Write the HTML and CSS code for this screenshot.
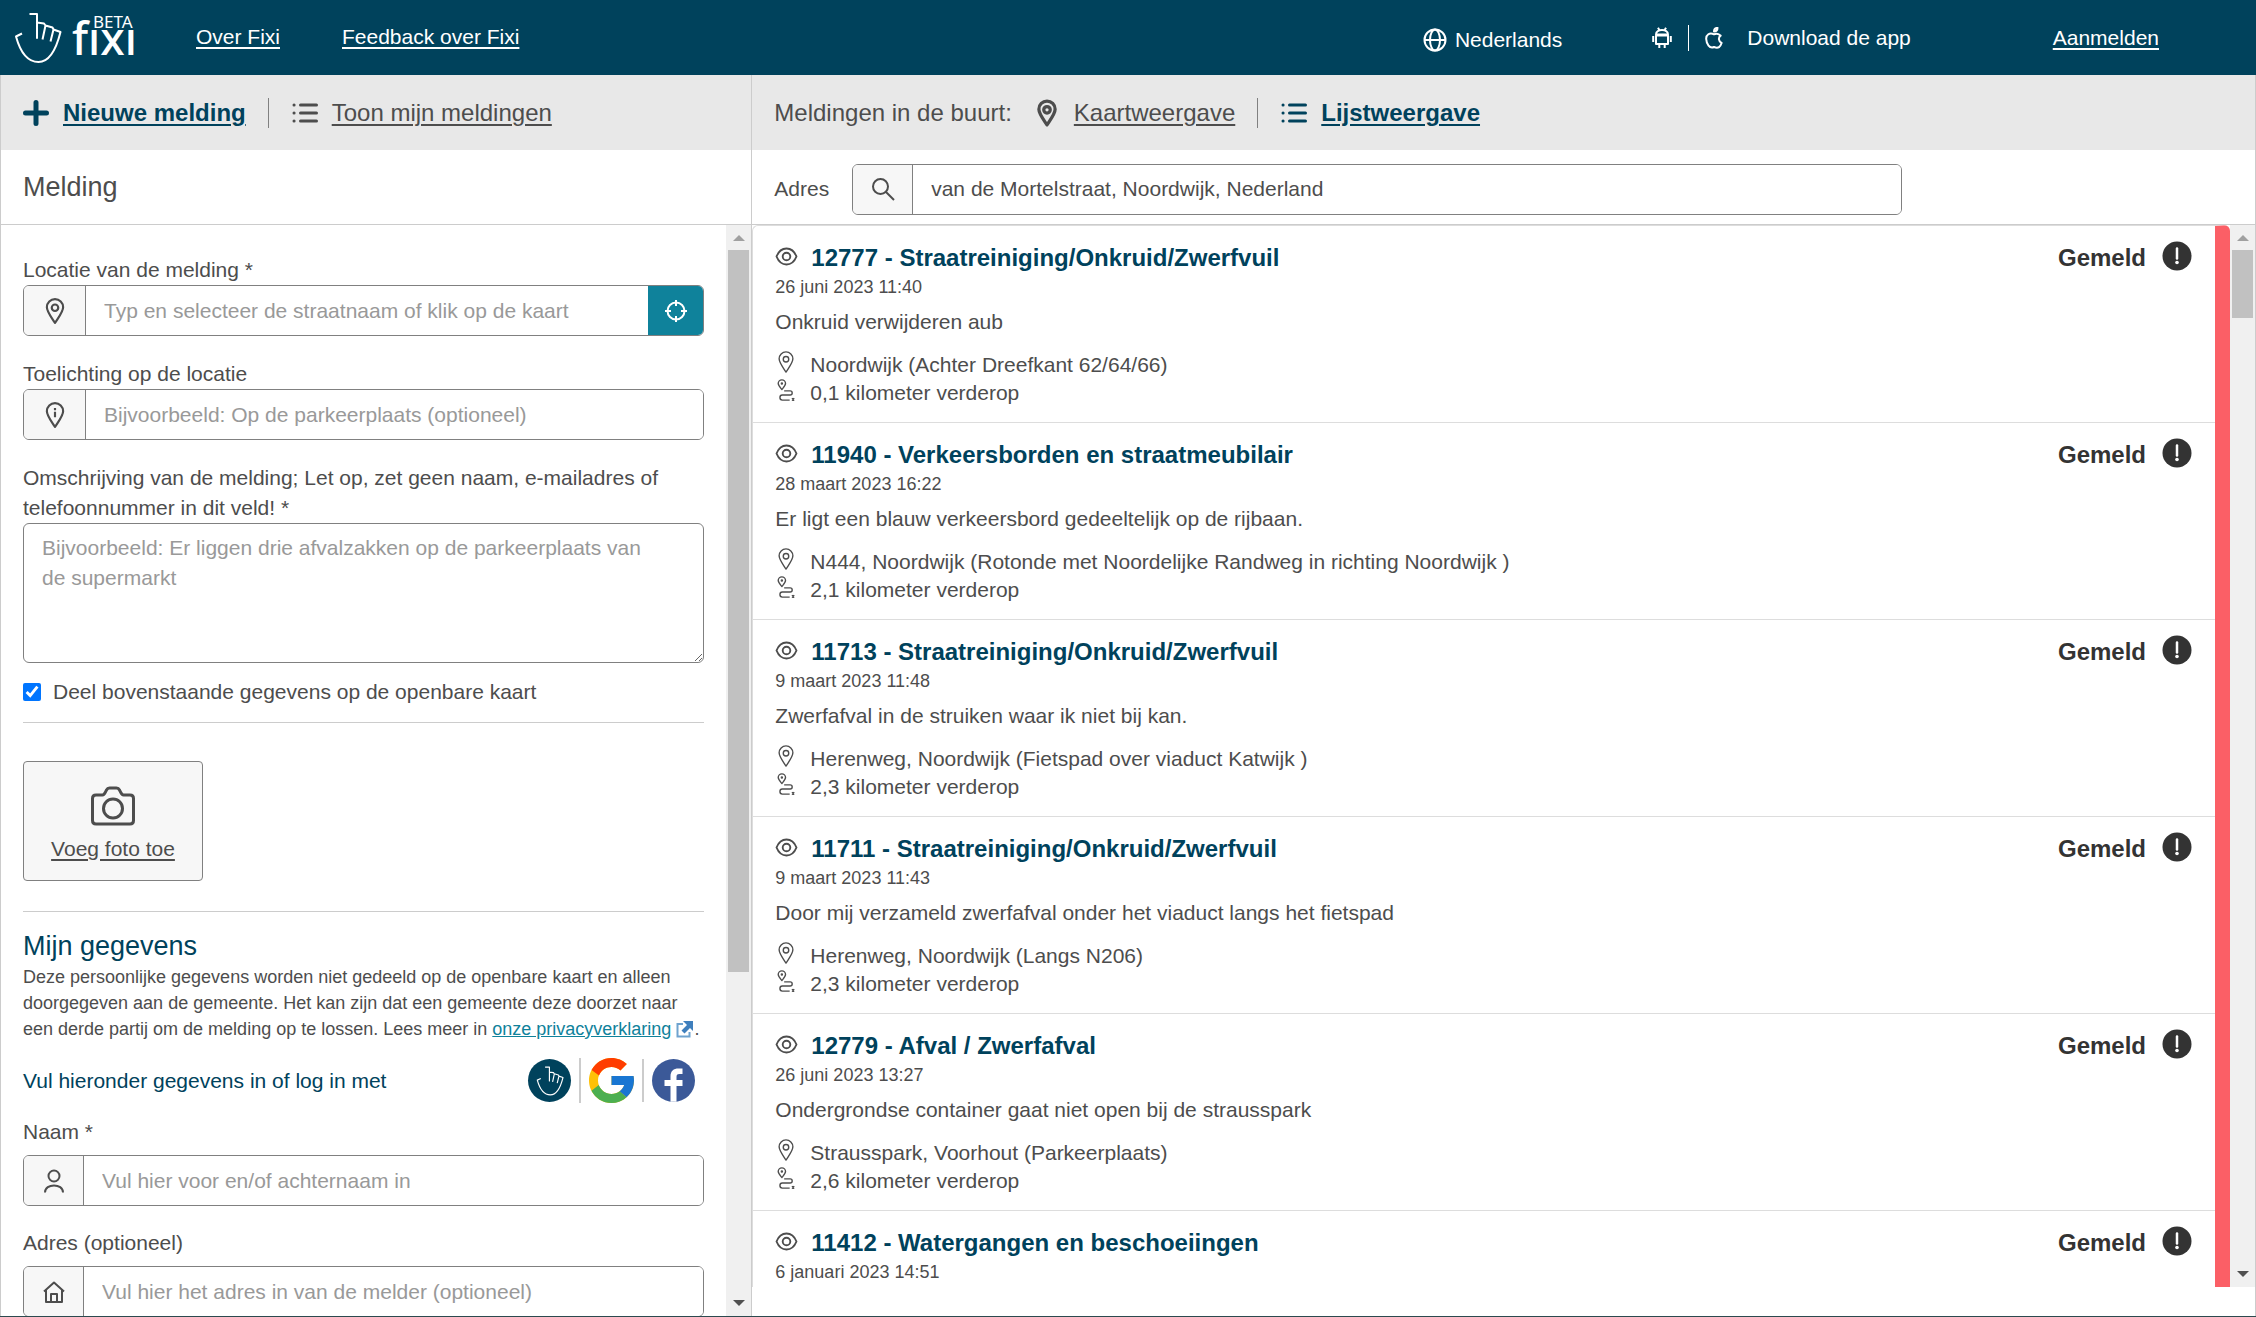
FILE: index.html
```html
<!DOCTYPE html>
<html lang="nl">
<head>
<meta charset="utf-8">
<title>Fixi</title>
<link rel="stylesheet" href="styles.css">
</head>
<body>
<svg class="sprite" aria-hidden="true">
  <symbol id="hand" viewBox="0 0 48 52"><path d="M8 21.500L2 24.500Q9 50 24.500 50Q39 50 46.500 20L39.500 17.500L36.500 29.500M39.500 17.500L38.500 15.500L31.500 13.500L28.500 27.500M31.500 13.500L30 11.500L23 10.500V26V2H15.500"/></symbol>
  <symbol id="pin" viewBox="0 0 24 24"><path d="M12 23C8 16.800 4.500 12.500 4.500 8.500a7.500 7.500 0 0 1 15 0C19.500 12.500 16 16.800 12 23z"/><circle cx="12" cy="9" r="3"/></symbol>
  <symbol id="pin-info" viewBox="0 0 24 24"><path d="M12 23C8 16.800 4.500 12.500 4.500 8.500a7.500 7.500 0 0 1 15 0C19.500 12.500 16 16.800 12 23z"/><path d="M12 5.500V7.500M12 9v5"/></symbol>
  <symbol id="eye" viewBox="0 0 24 20"><path d="M1.500 10C6 -1.200 18 -1.200 22.500 10C18 21.200 6 21.200 1.500 10z"/><circle cx="12" cy="10" r="4"/></symbol>
  <symbol id="route" viewBox="0 0 20 24"><path d="M5.500 11.500C3 8.500 1.500 7 1.500 5a4 4 0 0 1 8 0C9.500 7 8 8.500 5.500 11.500zM8 13h6.500c3 0 3 4.500 0 4.500H6c-3.500 0-3.500 5.500 0 5.500h8"/><circle cx="5.500" cy="5" r=".6"/><path d="M16.500 21l2.500 2.500M19 21l-2.500 2.500"/></symbol>
  <symbol id="list" viewBox="0 0 26 22"><path d="M8.500 3H24.500M8.500 11H24.500M8.500 19H24.500M2 3h.1M2 11h.1M2 19h.1"/></symbol>
  <symbol id="alert" viewBox="0 0 30 30"><circle cx="15" cy="15" r="14.500" fill="#333"/><path d="M15 7.500V17.500" stroke="#fff" stroke-width="2.500" stroke-linecap="round"/><circle cx="15" cy="21.500" r="1.800" fill="#fff"/></symbol>
</svg>

<header class="topbar">
  <a class="logo" href="#" aria-label="Fixi beta">
    <svg class="icon logo-hand"><use href="#hand"/></svg>
    <svg class="logo-word" viewBox="0 0 66 60"><text class="word-main" x="0" y="47">fıxı</text><text class="word-beta" x="21" y="20">BETA</text></svg>
  </a>
  <nav class="topnav">
    <a href="#">Over Fixi</a>
    <a href="#">Feedback over Fixi</a>
  </nav>
  <div class="tools">
    <button class="language" type="button">
      <svg class="icon" width="24" height="24" viewBox="0 0 24 24"><circle cx="12" cy="12" r="10.500"/><ellipse cx="12" cy="12" rx="5" ry="10.500"/><path d="M1.500 12h21"/></svg>
      Nederlands
    </button>
    <a class="download" href="#">
      <svg class="icon" width="20" height="22" viewBox="0 0 20 22"><path d="M4 8.500V17h12V8.500zM4 7.500C4 1.500 16 1.500 16 7.500zM6 .800L7.300 3M14 .800L12.700 3M1.200 9v6M18.800 9v6M7.300 17v4M12.700 17v4"/></svg>
      <span class="rule"></span>
      <svg class="icon" width="18" height="22" viewBox="0 0 18 22"><path d="M14.800 8C12.500 6 11 6.500 9 7.300C4.500 5 1 8 1.200 12C1.500 17 4.500 22 9 20C13.500 22 15.500 19.500 16.600 16C13.500 14.500 13 10.500 15.600 8.600zM9 4.500C9 2.500 10.500 1 12.500 .800C12.500 3 11 4.500 9 4.500z"/></svg>
      <span class="download-text">Download de app</span>
    </a>
    <a href="#">Aanmelden</a>
  </div>
</header>

<div class="columns">
  <section class="report">
    <nav class="tabs">
      <a class="tab active" href="#"><svg class="icon thick" width="26" height="26" viewBox="0 0 26 26"><path d="M13 2.500v21M2.500 13h21" stroke-width="5"/></svg><span>Nieuwe melding</span></a>
      <a class="tab second" href="#"><svg class="icon thick" width="26" height="22"><use href="#list"/></svg><span>Toon mijn meldingen</span></a>
    </nav>
    <div class="subhead"><h1>Melding</h1></div>
    <div class="scroller">
      <form class="form">
        <div class="field">
          <label for="loc">Locatie van de melding *</label>
          <div class="group">
            <span class="addon"><svg class="icon" width="26" height="26"><use href="#pin"/></svg></span>
            <input id="loc" type="text" placeholder="Typ en selecteer de straatnaam of klik op de kaart">
            <button class="locate" type="button" aria-label="Gebruik mijn locatie"><svg class="icon" width="24" height="24" viewBox="0 0 24 24"><circle cx="12" cy="12" r="8.500"/><path d="M12 1v6M12 17v6M1 12h6M17 12h6"/></svg></button>
          </div>
        </div>
        <div class="field">
          <label for="note">Toelichting op de locatie</label>
          <div class="group">
            <span class="addon"><svg class="icon" width="26" height="26"><use href="#pin-info"/></svg></span>
            <input id="note" type="text" placeholder="Bijvoorbeeld: Op de parkeerplaats (optioneel)">
          </div>
        </div>
        <div class="field">
          <label for="desc">Omschrijving van de melding; Let op, zet geen naam, e-mailadres of telefoonnummer in dit veld! *</label>
          <textarea id="desc" placeholder="Bijvoorbeeld: Er liggen drie afvalzakken op de parkeerplaats van de supermarkt"></textarea>
        </div>
        <div class="check">
          <input id="share" type="checkbox" checked>
          <label for="share">Deel bovenstaande gegevens op de openbare kaart</label>
        </div>
        <div class="photo-block">
          <button class="photo" type="button">
            <svg class="icon" width="44" height="40" viewBox="0 0 44 40"><path d="M5 9h6.500c2 0 2-1 4-5q1-2 3-2h7q2 0 3 2c2 4 2 5 4 5H39q3.500 0 3.500 3.500V34.500q0 3.500-3.500 3.500H5q-3.500 0-3.500-3.500V12.500Q1.500 9 5 9z"/><circle cx="22" cy="22.500" r="9.500"/></svg>
            <span>Voeg foto toe</span>
          </button>
        </div>
        <h2>Mijn gegevens</h2>
        <p class="privacy">Deze persoonlijke gegevens worden niet gedeeld op de openbare kaart en alleen doorgegeven aan de gemeente. Het kan zijn dat een gemeente deze doorzet naar een derde partij om de melding op te lossen. Lees meer in <a href="#">onze privacyverklaring</a> <svg class="external" width="18" height="18" viewBox="0 0 18 18"><path d="M7 4H1.500v12.500H13.500V12" fill="none" stroke="#6fa3cf" stroke-width="2"/><path d="M7 1h10v10l-3-3-4.500 4.500-1 1-3-3 5.500-5.500z" fill="#3f7fbd"/></svg>.</p>
        <div class="login">
          <span>Vul hieronder gegevens in of log in met</span>
          <div class="providers">
            <a class="fixi-login" href="#" aria-label="Fixi"><svg class="icon" width="28" height="30"><use href="#hand"/></svg></a>
            <a href="#" aria-label="Google"><svg width="45" height="45" viewBox="4 4 40 40"><path fill="#ffc107" d="M43.611,20.083H42V20H24v8h11.303c-1.649,4.657-6.080,8-11.303,8c-6.627,0-12-5.373-12-12c0-6.627,5.373-12,12-12c3.059,0,5.842,1.154,7.961,3.039l5.657-5.657C34.046,6.053,29.268,4,24,4C12.955,4,4,12.955,4,24c0,11.045,8.955,20,20,20c11.045,0,20-8.955,20-20C44,22.659,43.862,21.350,43.611,20.083z"/><path fill="#ff3d00" d="M6.306,14.691l6.571,4.819C14.655,15.108,18.961,12,24,12c3.059,0,5.842,1.154,7.961,3.039l5.657-5.657C34.046,6.053,29.268,4,24,4C16.318,4,9.656,8.337,6.306,14.691z"/><path fill="#4caf50" d="M24,44c5.166,0,9.860-1.977,13.409-5.192l-6.190-5.238C29.211,35.091,26.715,36,24,36c-5.202,0-9.619-3.317-11.283-7.946l-6.522,5.025C9.505,39.556,16.227,44,24,44z"/><path fill="#1976d2" d="M43.611,20.083H42V20H24v8h11.303c-0.792,2.237-2.231,4.166-4.087,5.571l6.193,5.236C36.971,39.205,44,34,44,24C44,22.659,43.862,21.350,43.611,20.083z"/></svg></a>
            <a href="#" aria-label="Facebook"><svg width="43" height="43" viewBox="0 0 43 43"><circle cx="21.500" cy="21.500" r="21.500" fill="#3b5998"/><path fill="#fff" d="M18.500 42.800V27H12.500V21H18.500V17.500C18.500 12 21.500 9.500 26.500 9.500H30.500V15H27.500C25 15 24.500 16 24.500 18V21H30.500V27H24.500V42.800z"/></svg></a>
          </div>
        </div>
        <div class="field spaced">
          <label for="name">Naam *</label>
          <div class="group">
            <span class="addon narrow"><svg class="icon" width="22" height="24" viewBox="0 0 22 24"><circle cx="11" cy="7" r="5.500"/><path d="M2 23.500C2 14 20 14 20 23.500"/></svg></span>
            <input id="name" type="text" placeholder="Vul hier voor en/of achternaam in">
          </div>
        </div>
        <div class="field spaced">
          <label for="address">Adres (optioneel)</label>
          <div class="group">
            <span class="addon narrow"><svg class="icon" width="22" height="22" viewBox="0 0 22 22"><path d="M1 10.500L11 1.500l10 9M3 9v12h16V9M8 21v-8h6v8"/></svg></span>
            <input id="address" type="text" placeholder="Vul hier het adres in van de melder (optioneel)">
          </div>
        </div>
      </form>
      <div class="bar" aria-hidden="true"><i class="up"></i><i class="thumb long"></i><i class="down"></i></div>
    </div>
  </section>

  <section class="nearby">
    <nav class="tabs">
      <span class="caption">Meldingen in de buurt:</span>
      <a class="tab" href="#"><svg class="icon map-pin" width="26" height="28"><use href="#pin"/></svg><span>Kaartweergave</span></a>
      <a class="tab second active" href="#"><svg class="icon thick" width="26" height="22"><use href="#list"/></svg><span>Lijstweergave</span></a>
    </nav>
    <div class="subhead search-row">
      <label for="search">Adres</label>
      <div class="group search">
        <span class="addon narrow"><svg class="icon" width="24" height="24" viewBox="0 0 24 24"><circle cx="9.500" cy="9.500" r="7.500"/><path d="M15 15l8 8"/></svg></span>
        <input id="search" type="text" value="van de Mortelstraat, Noordwijk, Nederland">
      </div>
    </div>
    <div class="scroller list-box">
      <div class="list">
        <article class="item">
          <div class="title"><svg class="icon" width="23" height="19"><use href="#eye"/></svg><h3>12777 - Straatreiniging/Onkruid/Zwerfvuil</h3><span class="status">Gemeld</span><svg class="alert" width="30" height="30"><use href="#alert"/></svg></div>
          <time>26 juni 2023 11:40</time>
          <p>Onkruid verwijderen aub</p>
          <div class="meta"><svg class="icon" width="22" height="24"><use href="#pin"/></svg>Noordwijk (Achter Dreefkant 62/64/66)</div>
          <div class="meta"><svg class="icon" width="22" height="22"><use href="#route"/></svg>0,1 kilometer verderop</div>
        </article>
        <article class="item">
          <div class="title"><svg class="icon" width="23" height="19"><use href="#eye"/></svg><h3>11940 - Verkeersborden en straatmeubilair</h3><span class="status">Gemeld</span><svg class="alert" width="30" height="30"><use href="#alert"/></svg></div>
          <time>28 maart 2023 16:22</time>
          <p>Er ligt een blauw verkeersbord gedeeltelijk op de rijbaan.</p>
          <div class="meta"><svg class="icon" width="22" height="24"><use href="#pin"/></svg>N444, Noordwijk (Rotonde met Noordelijke Randweg in richting Noordwijk )</div>
          <div class="meta"><svg class="icon" width="22" height="22"><use href="#route"/></svg>2,1 kilometer verderop</div>
        </article>
        <article class="item">
          <div class="title"><svg class="icon" width="23" height="19"><use href="#eye"/></svg><h3>11713 - Straatreiniging/Onkruid/Zwerfvuil</h3><span class="status">Gemeld</span><svg class="alert" width="30" height="30"><use href="#alert"/></svg></div>
          <time>9 maart 2023 11:48</time>
          <p>Zwerfafval in de struiken waar ik niet bij kan.</p>
          <div class="meta"><svg class="icon" width="22" height="24"><use href="#pin"/></svg>Herenweg, Noordwijk (Fietspad over viaduct Katwijk )</div>
          <div class="meta"><svg class="icon" width="22" height="22"><use href="#route"/></svg>2,3 kilometer verderop</div>
        </article>
        <article class="item">
          <div class="title"><svg class="icon" width="23" height="19"><use href="#eye"/></svg><h3>11711 - Straatreiniging/Onkruid/Zwerfvuil</h3><span class="status">Gemeld</span><svg class="alert" width="30" height="30"><use href="#alert"/></svg></div>
          <time>9 maart 2023 11:43</time>
          <p>Door mij verzameld zwerfafval onder het viaduct langs het fietspad</p>
          <div class="meta"><svg class="icon" width="22" height="24"><use href="#pin"/></svg>Herenweg, Noordwijk (Langs N206)</div>
          <div class="meta"><svg class="icon" width="22" height="22"><use href="#route"/></svg>2,3 kilometer verderop</div>
        </article>
        <article class="item">
          <div class="title"><svg class="icon" width="23" height="19"><use href="#eye"/></svg><h3>12779 - Afval / Zwerfafval</h3><span class="status">Gemeld</span><svg class="alert" width="30" height="30"><use href="#alert"/></svg></div>
          <time>26 juni 2023 13:27</time>
          <p>Ondergrondse container gaat niet open bij de strausspark</p>
          <div class="meta"><svg class="icon" width="22" height="24"><use href="#pin"/></svg>Strausspark, Voorhout (Parkeerplaats)</div>
          <div class="meta"><svg class="icon" width="22" height="22"><use href="#route"/></svg>2,6 kilometer verderop</div>
        </article>
        <article class="item">
          <div class="title"><svg class="icon" width="23" height="19"><use href="#eye"/></svg><h3>11412 - Watergangen en beschoeiingen</h3><span class="status">Gemeld</span><svg class="alert" width="30" height="30"><use href="#alert"/></svg></div>
          <time>6 januari 2023 14:51</time>
        </article>
      </div>
      <div class="bar" aria-hidden="true"><i class="up"></i><i class="thumb short"></i><i class="down"></i></div>
    </div>
  </section>
</div>
</body>
</html>
```
FILE: styles.css
```css
* { box-sizing: border-box; }

body {
  margin: 0;
  height: 100vh;
  display: flex;
  flex-direction: column;
  overflow: hidden;
  border-bottom: 1px solid #2c4a4f;
  background: #fff;
  color: #4d4d4d;
  font: 21px/30px "Liberation Sans", Arial, sans-serif;
}

h1, h2, h3, p { margin: 0; font-weight: normal; }
button, input, textarea { font: inherit; color: inherit; }
button { cursor: pointer; }
svg { flex: none; display: block; }

.sprite { position: absolute; width: 0; height: 0; }
.icon { fill: none; stroke: currentColor; stroke-width: 2; stroke-linejoin: round; }

/* Top bar */
.topbar {
  flex: none;
  height: 75px;
  display: flex;
  align-items: center;
  padding: 0 97px 0 14px;
  background: #00425c;
  color: #fff;
}
.topbar a { color: #fff; text-underline-offset: 3px; }
.topbar .language, .topbar .download, .topbar .tools a { color: #fff; }
.logo { display: flex; align-items: center; gap: 10px; height: 75px; }
.logo-hand { width: 48px; height: 52px; }
.logo-word { width: 66px; height: 60px; }
.logo-word text { fill: #fff; font-family: "Noto Sans", sans-serif; }
.word-main { font-size: 45px; font-weight: 500; }
.word-beta { font-size: 17px; }
.topnav { display: flex; gap: 62px; margin-left: 58px; padding-bottom: 2px; }
.tools { display: flex; align-items: center; margin-left: auto; }
.language {
  display: flex;
  align-items: center;
  gap: 8px;
  padding: 4px 0 0;
  border: 0;
  background: none;
}
.topbar .download {
  display: flex;
  align-items: center;
  gap: 16px;
  margin: 0 142px 0 90px;
  text-decoration: none;
}
.rule { width: 1px; height: 26px; background: #fff; }
.download-text { margin-left: 8px; }

/* Two columns */
.columns { flex: 1; min-height: 0; display: flex; border: solid #ccc; border-width: 0 1px; }
.report { flex: none; width: 33.3333%; display: flex; flex-direction: column; border-right: 1px solid #ccc; }
.nearby { flex: 1; min-width: 0; display: flex; flex-direction: column; padding-bottom: 29px; }

.tabs {
  flex: none;
  height: 75px;
  display: flex;
  align-items: center;
  padding: 0 22px;
  background: #e8e8e8;
  font-size: 24px;
}
.tab { display: flex; align-items: center; gap: 14px; color: #4d4d4d; text-underline-offset: 3px; text-decoration: none; }
.tab span { text-decoration: underline; text-decoration-thickness: 2px; }
.tab.active { color: #00425c; font-weight: bold; }
.tab.second { margin-left: 22px; padding-left: 23px; border-left: 1px solid #808080; }
.thick { stroke-width: 3; stroke-linecap: round; }
.map-pin { stroke-width: 3; }
.caption { margin-right: 22px; }

.subhead {
  flex: none;
  height: 75px;
  display: flex;
  align-items: center;
  gap: 23px;
  padding: 0 22px;
  border-bottom: 1px solid #ccc;
}
.search-row { padding-top: 4px; }
h1, h2 { font-size: 27px; }
.search { width: 72%; }

.scroller { flex: 1; min-height: 0; display: flex; overflow: hidden; }

/* Input groups */
.group { display: flex; height: 51px; border: 1px solid #808080; border-radius: 6px; overflow: hidden; }
.group input { flex: 1; min-width: 0; padding: 0 18px; border: 0; background: #fff; outline: 0; }
.addon { flex: none; width: 62px; display: grid; place-items: center; background: #f7f7f7; border-right: 1px solid #808080; }
.addon.narrow { width: 60px; }
::placeholder { color: #999; opacity: 1; }
.locate { width: 56px; margin: -1px; padding: 0; display: grid; place-items: center; border: 0; background: #0f829b; color: #fff; }

/* Form */
.form { flex: 1; min-width: 0; padding: 30px 22px 0; }
.form label { display: block; }
.field { margin-bottom: 23px; }
.field.spaced { margin-bottom: 22px; }
.field.spaced label { margin-bottom: 8px; }
textarea {
  display: block;
  width: 100%;
  height: 140px;
  padding: 9px 42px 9px 18px;
  border: 1px solid #808080;
  border-radius: 6px;
}
.check { display: flex; align-items: center; gap: 12px; margin-top: -9px; }
.check input { width: 18px; height: 18px; margin: 0; accent-color: #0075ff; }
.photo-block { margin: 15px 0 19px; padding: 38px 0 30px; border: solid #ccc; border-width: 1px 0; }
.photo {
  width: 180px;
  height: 120px;
  display: flex;
  flex-direction: column;
  align-items: center;
  justify-content: center;
  gap: 8px;
  padding: 8px 0 0;
  border: 1px solid #808080;
  border-radius: 4px;
  background: #f7f7f7;
}
.photo .icon { stroke-width: 3; }
.photo span { text-decoration: underline; text-underline-offset: 3px; }
h2 { color: #00425c; }
.privacy { margin: 3px -2px 16px 0; font-size: 18px; line-height: 26px; }
.privacy a { color: #0f829b; }
.external { display: inline; vertical-align: -3px; }
.login { display: flex; align-items: center; justify-content: space-between; margin-bottom: 14px; color: #00425c; }
.providers { display: flex; align-items: center; padding-right: 9px; }
.providers a + a { margin-left: 8px; padding-left: 8px; border-left: 2px solid #ccc; }
.fixi-login { width: 43px; height: 43px; display: grid; place-items: center; border-radius: 50%; background: #00425c; color: #fff; }

/* Scroll bars */
.bar { flex: none; width: 25px; display: flex; flex-direction: column; align-items: center; padding: 10px 0; background: #f0f0f0; }
.up, .down { border: solid transparent; border-width: 0 6px; }
.up { border-bottom: 6px solid #a0a0a0; }
.down { margin-top: auto; border-top: 6px solid #505050; }
.thumb { width: 21px; margin-top: 9px; background: #c1c1c1; }
.long { height: 722px; }
.short { height: 68px; }

/* List of reports */
.list { flex: 1; min-width: 0; border: 1px solid #ddd; border-width: 1px 0 0 1px; border-radius: 6px 6px 0 0; border-right: 15px solid #fb5f66; }
.item { height: 197px; padding: 17px 23px 0 22px; border-bottom: 1px solid #ddd; }
.title { display: flex; align-items: center; height: 30px; color: #333; font-size: 24px; font-weight: bold; }
.title .icon { margin: 0 13px 4px 0; color: #4d4d4d; }
.title h3 { color: #00425c; font-size: 24px; font-weight: bold; }
.status { margin: 0 16px 0 auto; }
.alert { margin-bottom: 4px; }
.item time { display: block; height: 34px; font-size: 18px; line-height: 28px; }
.item p { margin-bottom: 14px; }
.meta { display: flex; align-items: center; gap: 13px; height: 28px; }
.meta .icon { margin-bottom: 6px; stroke-width: 1.500; }
```
